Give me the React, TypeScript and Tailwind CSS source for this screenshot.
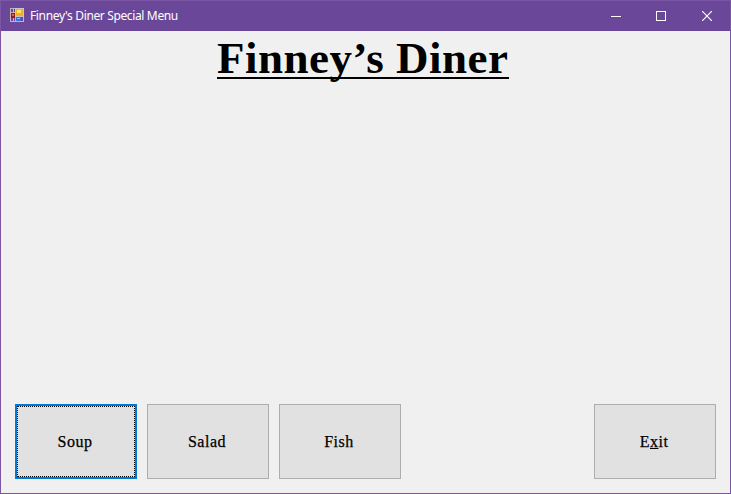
import type { ReactNode } from "react";

function AppIcon() {
  return (
    <svg width="16" height="16" viewBox="0 0 16 16" shapeRendering="crispEdges" className="block">
      <rect x="0" y="0" width="14" height="14" fill="#bdb7b5" />
      <rect x="1" y="1" width="4" height="3" fill="#6b4799" />
      <rect x="1" y="10" width="4" height="3" fill="#6b4799" />
      <rect x="3" y="1" width="1" height="12" fill="#bdb7b5" />
      <rect x="11" y="9" width="2" height="4" fill="#6b4799" />
      <rect x="5" y="0" width="9" height="9" fill="#c9c4c0" />
      <rect x="1" y="5" width="4" height="5" fill="#a61313" />
      <rect x="2" y="6" width="2" height="2" fill="#e2603f" />
      <rect x="6" y="1" width="7" height="7" fill="#f3b01c" />
      <rect x="7" y="2" width="4" height="3" fill="#ffe27a" />
      <rect x="6" y="9" width="5" height="4" fill="#3672d8" />
      <rect x="7" y="10" width="3" height="1" fill="#8fbcf8" />
    </svg>
  );
}

function TitleBar() {
  return (
    <header className="flex h-[30px] shrink-0 items-center bg-[#6b4799] text-white">
      <div className="pl-[9px]">
        <AppIcon />
      </div>
      <h1 className="grow pl-[4px] font-['Noto_Sans',sans-serif] text-[12px] leading-none tracking-[-0.36px]">
        Finney's Diner Special Menu
      </h1>
      <div className="flex">
        <button className="flex h-[30px] w-[44px] items-center justify-center" aria-label="Minimize">
          <svg width="10" height="10" shapeRendering="crispEdges">
            <path d="M0 5.5H10" stroke="white" />
          </svg>
        </button>
        <button className="flex h-[30px] w-[46px] items-center justify-center" aria-label="Maximize">
          <svg width="10" height="10" shapeRendering="crispEdges">
            <rect x="0.5" y="0.5" width="9" height="9" fill="none" stroke="white" />
          </svg>
        </button>
        <button className="flex h-[30px] w-[46px] items-center justify-center" aria-label="Close">
          <svg width="10" height="10">
            <path d="M0 0L10 10M10 0L0 10" stroke="white" strokeWidth="1.2" />
          </svg>
        </button>
      </div>
    </header>
  );
}

function MenuButton({ children, focused = false }: { children: ReactNode; focused?: boolean }) {
  return (
    <button
      className={
        focused
          ? "h-[75px] w-[122px] border-2 border-[#0078d7] bg-[#e1e1e1]"
          : "h-[75px] w-[122px] border border-[#adadad] bg-[#e1e1e1]"
      }
    >
      <span
        className={
          focused
            ? "flex h-full items-center justify-center border border-dotted border-black"
            : "flex h-full items-center justify-center"
        }
      >
        <span className="pr-[2px] font-['Liberation_Serif',serif] text-[16px] leading-none tracking-[0.5px] text-black [-webkit-text-stroke:0.25px_black]">
          {children}
        </span>
      </span>
    </button>
  );
}

export default function App() {
  return (
    <div className="flex h-[494px] w-[731px] flex-col border border-[#7a56a5] bg-[#f0f0f0]">
      <TitleBar />
      <main className="flex grow flex-col justify-between px-[14px] pb-[14px]">
        <div className="flex justify-center pt-[4px] pr-[5px]">
          <h2 className="h-[44px] w-[292px] border-b-2 border-black font-['Liberation_Serif',serif] text-[45px] leading-[46px] font-bold tracking-[0.5px] whitespace-nowrap text-black">
            Finney’s Diner
          </h2>
        </div>
        <div className="flex gap-[10px]">
          <MenuButton focused>Soup</MenuButton>
          <MenuButton>Salad</MenuButton>
          <MenuButton>Fish</MenuButton>
          <div className="ml-auto">
            <MenuButton>
              E<span className="underline">x</span>it
            </MenuButton>
          </div>
        </div>
      </main>
    </div>
  );
}
